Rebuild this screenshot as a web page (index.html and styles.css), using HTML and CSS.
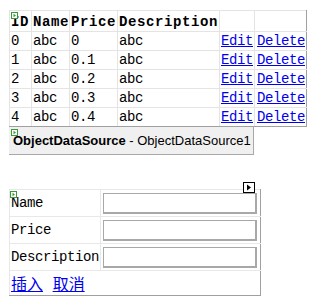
FILE: index.html
```html
<!DOCTYPE html>
<html>
<head>
<meta charset="utf-8">
<link rel="stylesheet" href="styles.css">
</head>
<body>
<div class="page">
  <div class="ctl">
    <svg class="glyph" width="7" height="7" viewBox="0 0 7 7"><rect x="0.5" y="0.5" width="6" height="6" fill="#fff" stroke="#3a9a3a"/><path d="M2.5 1.8 L5 3.5 L2.5 5.2 Z" fill="#3a9a3a"/></svg>
    <table class="grid">
      <colgroup><col class="c1"><col class="c2"><col class="c3"><col class="c4"><col class="c5"><col class="c6"></colgroup>
      <tr class="head"><th>ID</th><th>Name</th><th>Price</th><th>Description</th><th></th><th></th></tr>
      <tr><td>0</td><td>abc</td><td>0</td><td>abc</td><td class="r"><a href="#">Edit</a></td><td class="r"><a href="#">Delete</a></td></tr>
      <tr><td>1</td><td>abc</td><td>0.1</td><td>abc</td><td class="r"><a href="#">Edit</a></td><td class="r"><a href="#">Delete</a></td></tr>
      <tr><td>2</td><td>abc</td><td>0.2</td><td>abc</td><td class="r"><a href="#">Edit</a></td><td class="r"><a href="#">Delete</a></td></tr>
      <tr><td>3</td><td>abc</td><td>0.3</td><td>abc</td><td class="r"><a href="#">Edit</a></td><td class="r"><a href="#">Delete</a></td></tr>
      <tr><td>4</td><td>abc</td><td>0.4</td><td>abc</td><td class="r"><a href="#">Edit</a></td><td class="r"><a href="#">Delete</a></td></tr>
    </table>
  </div>
  <div class="ctl ods">
    <svg class="glyph" width="7" height="7" viewBox="0 0 7 7"><rect x="0.5" y="0.5" width="6" height="6" fill="#fff" stroke="#3a9a3a"/><path d="M2.5 1.8 L5 3.5 L2.5 5.2 Z" fill="#3a9a3a"/></svg>
    <span class="b">ObjectDataSource</span> - ObjectDataSource1
  </div>
  <div class="ctl dv">
    <svg class="glyph" width="7" height="7" viewBox="0 0 7 7"><rect x="0.5" y="0.5" width="6" height="6" fill="#fff" stroke="#3a9a3a"/><path d="M2.5 1.8 L5 3.5 L2.5 5.2 Z" fill="#3a9a3a"/></svg>
    <svg class="tag" width="12" height="11" viewBox="0 0 12 11"><rect x="0.5" y="0.5" width="11" height="10" fill="#fff" stroke="#000"/><path d="M4 2.5 L8 5.5 L4 8.5 Z" fill="#000"/></svg>
    <table class="form">
      <colgroup><col class="l"><col class="f"></colgroup>
      <tr><td>Name</td><td><span class="tb"></span></td></tr>
      <tr><td>Price</td><td><span class="tb"></span></td></tr>
      <tr><td>Description</td><td><span class="tb"></span></td></tr>
      <tr class="links"><td colspan="2"><a href="#">插入</a> <a href="#">取消</a></td></tr>
    </table>
  </div>
</div>
</body>
</html>
```
FILE: styles.css
```css
html, body {
  margin: 0;
  padding: 0;
  background: #fff;
}
.page {
  padding: 10px 0 0 9px;
  font-family: "Liberation Mono", "Noto Sans CJK SC", monospace;
  font-size: 14px;
  letter-spacing: -0.4px;
  color: #000;
}
.ctl {
  position: relative;
}
.glyph {
  position: absolute;
  display: block;
  z-index: 2;
}
.ctl > .glyph {
  left: 2px;
  top: 2px;
}
.grid {
  border-collapse: collapse;
  table-layout: fixed;
  width: 297px;
}
.c1 { width: 22px; }
.c2 { width: 38px; }
.c3 { width: 48px; }
.c4 { width: 102px; }
.c5 { width: 35px; }
.c6 { width: 52px; }
.grid th, .grid td {
  border: 1px solid #e4e4e4;
  padding: 0 0 0 1px;
  text-align: left;
  white-space: nowrap;
  overflow: hidden;
  vertical-align: middle;
}
.grid th:last-child, .grid td:last-child { border-right-color: #a0a0a0; }
.grid tr:last-child td { border-bottom-color: #a0a0a0; }
.grid tr { height: 19px; }
.grid tr.head { height: 21px; }
.grid th {
  font-weight: bold;
  font-size: 14px;
  letter-spacing: 0.6px;
  padding-top: 2px;
}
.grid td.r { text-align: right; padding: 0 1px 0 0; }
a { color: #0000ee; text-decoration: underline; }
.ods {
  width: 245px;
  height: 28px;
  box-sizing: border-box;
  background: #f0f0f0;
  border-right: 1px solid #a8a8a8;
  border-bottom: 1px solid #a8a8a8;
  font-family: "Liberation Sans", Arial, sans-serif;
  font-size: 13px;
  letter-spacing: 0;
  padding: 6px 0 0 4px;
  line-height: 16px;
  white-space: nowrap;
  overflow: hidden;
}
.ods .glyph { left: 2px; top: 2px; }
.b { font-weight: bold; }
.dv {
  margin-top: 34px;
}
.dv .glyph { left: 1px; top: 2px; }
.tag {
  position: absolute;
  left: 234px;
  top: -7px;
  display: block;
}
.form {
  border-collapse: collapse;
  table-layout: fixed;
  width: 251px;
}
.l { width: 91px; }
.f { width: 160px; }
.form td {
  border: 1px solid #e8e8e8;
  padding: 0 0 0 1px;
  height: 26px;
  white-space: nowrap;
  vertical-align: middle;
}
.form td:last-child { border-right-color: #a0a0a0; }
.form tr:last-child td { border-bottom-color: #a0a0a0; }
.form tr.links td { height: 20px; vertical-align: bottom; font-size: 16px; letter-spacing: 0; }
.tb {
  display: block;
  width: 151px;
  height: 18px;
  border: 2px solid #a8a8a8;
  border-width: 1px 2px 2px 1px;
  margin-left: 1px;
  background: #fff;
}
```
